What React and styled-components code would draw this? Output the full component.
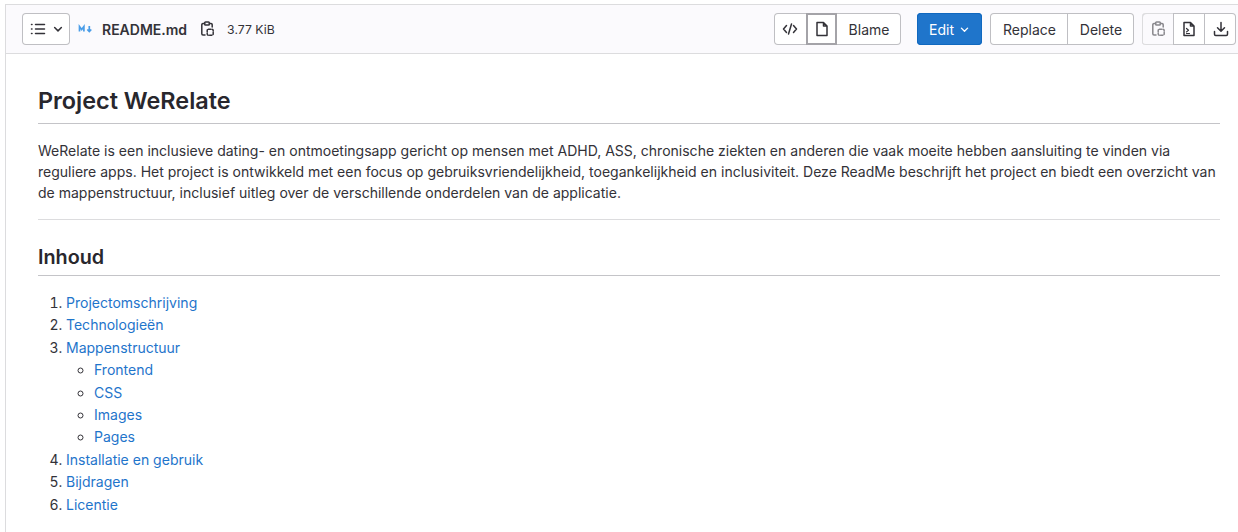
import React from "react";
import styled, { createGlobalStyle } from "styled-components";

const GlobalStyle = createGlobalStyle`
  html, body {
    margin: 0;
    padding: 0;
    background: #fff;
    overflow: hidden;
  }
  body {
    font-family: Inter, "Noto Sans", sans-serif;
    color: #333238;
  }
`;

const Page = styled.div`
  width: 1238px;
  height: 532px;
  padding: 4px 0 0 5px;
  box-sizing: border-box;
  overflow: hidden;
`;
const Card = styled.div`
  width: 1240px;
  height: 540px;
  box-sizing: border-box;
  border-top: 1px solid #dcdcde;
  border-left: 1px solid #dcdcde;
`;
const Header = styled.div`
  display: flex;
  align-items: center;
  height: 48px;
  box-sizing: content-box;
  padding-right: 9px;
  padding-left: 16px;
  background: #fbfafd;
  border-bottom: 1px solid #dcdcde;
`;
const FileInfo = styled.div`
  display: flex;
  align-items: center;
  flex: 1;
`;
const Group = styled.div`
  display: flex;
  height: 32px;
  margin-left: ${(p) => p.$gap || 0}px;
  background: #fff;
  border-radius: 4px;
  box-shadow: inset 0 0 0 1px #bfbfc3;
`;
const Button = styled.div`
  display: flex;
  align-items: center;
  justify-content: center;
  box-sizing: border-box;
  width: ${(p) => p.$w}px;
  height: 32px;
  padding-left: ${(p) => p.$nudge || 0}px;
  font-size: 14px;
  color: #333238;
  border-left: ${(p) => (p.$split ? "1px solid #bfbfc3" : "none")};
  box-shadow: ${(p) => (p.$active ? "inset 0 0 0 2px #a4a3a8" : "none")};
`;
const DisabledButton = styled(Button)`
  background: #fbfafd;
  border-radius: 4px 0 0 4px;
  box-shadow: inset 1px 1px 0 #dcdcde, inset 0 -1px 0 #dcdcde;
`;
const TocToggle = styled(Group)`
  width: 48px;
  align-items: center;
  justify-content: center;
  gap: 6px;
  padding-left: 1px;
  box-sizing: border-box;
`;
const MdIcon = styled.svg`
  width: 16px;
  height: 16px;
  margin-left: 8px;
  color: #4a9de8;
`;
const FileName = styled.span`
  margin-left: 8px;
  font-size: 14px;
  font-weight: 600;
  color: #333238;
`;
const CopyPath = styled.span`
  display: flex;
  margin-left: 12px;
`;
const FileSize = styled.span`
  margin-left: 12px;
  font-size: 12.25px;
  color: #333238;
`;
const EditButton = styled.div`
  display: flex;
  align-items: center;
  justify-content: center;
  gap: 5px;
  width: 65px;
  height: 32px;
  margin-left: 16px;
  border-radius: 4px;
  background: #1f75cb;
  box-shadow: inset 0 0 0 1px #1068bf;
  color: #fff;
  font-size: 14px;
`;
const Body = styled.div`
  padding: 32px 18px 0 32px;
  width: 1182px;
  font-size: 14.02px;
  line-height: 21px;
  color: #333238;
`;
const Heading = styled.h1`
  margin: ${(p) => (p.$sub ? "24px" : "0")} 0 16px;
  padding-bottom: ${(p) => (p.$sub ? "5px" : "7px")};
  font-size: ${(p) => (p.$sub ? "19.8px" : "23.4px")};
  line-height: ${(p) => (p.$sub ? "26px" : "30px")};
  font-weight: 600;
  color: #28272d;
  border-bottom: 1px solid #c4c4c8;
`;
const Paragraph = styled.p`
  margin: 0 0 16px;
`;
const Rule = styled.hr`
  margin: 0;
  border: 0;
  border-top: 1px solid #dcdcde;
`;
const OrderedList = styled.ol`
  margin: 0;
  padding-left: 28px;
`;
const SubList = styled.ul`
  margin: 0;
  padding-left: 28px;
  list-style: circle;
`;
const Item = styled.li`
  margin-top: 1.4px;
`;
const TocLink = styled.a`
  color: #1f75cb;
  text-decoration: none;
`;

const Icon = ({ children, color = "#333238", size = 16 }) => (
  <svg width={size} height={size} viewBox="0 0 16 16" fill="none" stroke={color} strokeWidth="1.5" strokeLinecap="round" strokeLinejoin="round">
    {children}
  </svg>
);

const ClipboardIcon = ({ color }) => (
  <Icon color={color}>
    <path d="M5.500 2.500H4a1.200 1.200 0 0 0-1.200 1.200v9.100A1.200 1.200 0 0 0 4 14h2" />
    <path d="M10.500 2.500H12a1.200 1.200 0 0 1 1.200 1.200v2.300" />
    <rect x="5.700" y="1" width="4.600" height="3" rx=".8" />
    <rect x="8.200" y="8.200" width="6" height="6" rx="1.200" strokeDasharray="2.200 1.400" />
  </Icon>
);

const items = ["Frontend", "CSS", "Images", "Pages"];

export default function App() {
  return (
    <Page>
      <GlobalStyle />
      <Card>
        <Header>
          <FileInfo>
            <TocToggle>
              <Icon>
                <path d="M5.500 3.500h9M5.500 8h9M5.500 12.500h9M1.500 3.500h.5M1.500 8h.5M1.500 12.500h.5" />
              </Icon>
              <Icon size={12}>
                <path d="M3.500 6l4.500 4.500L12.500 6" strokeWidth="2" />
              </Icon>
            </TocToggle>
            <MdIcon viewBox="0 0 16 16" fill="none" stroke="currentColor" strokeWidth="1.700">
              <path d="M1.500 10.500V5.500l2.200 3 2.200-3v5" />
              <path d="M11.300 5v5.500M9.300 8.500l2 2 2-2" />
            </MdIcon>
            <FileName>README.md</FileName>
            <CopyPath>
              <ClipboardIcon />
            </CopyPath>
            <FileSize>3.77 KiB</FileSize>
          </FileInfo>
          <Group>
            <Button $w={32}>
              <Icon>
                <path d="M4.500 4.500L1.500 8l3 3.500M11.500 4.500l3 3.500-3 3.500M9.500 3l-3 10" />
              </Icon>
            </Button>
            <Button $w={31} $active>
              <Icon>
                <path d="M3 1.500h6.500L13 5v9.500H3zM9.500 1.500V5H13" />
              </Icon>
            </Button>
            <Button $w={64}>Blame</Button>
          </Group>
          <EditButton>
            Edit
            <Icon color="#fff" size={11}>
              <path d="M3.500 6l4.500 4.500L12.500 6" strokeWidth="2" />
            </Icon>
          </EditButton>
          <Group $gap={8}>
            <Button $w={77} $nudge={2}>Replace</Button>
            <Button $w={67} $split>Delete</Button>
          </Group>
          <Group $gap={8}>
            <DisabledButton $w={31}>
              <ClipboardIcon color="#89888d" />
            </DisabledButton>
            <Button $w={31} $split>
              <Icon>
                <path d="M3 1.500h6.500L13 5v9.500H3zM9.500 1.500V5H13" />
                <path d="M5.500 7.500l2 1.700-2 1.700M5.500 12.500h3" strokeWidth="1.200" />
              </Icon>
            </Button>
            <Button $w={32} $split>
              <Icon>
                <path d="M8 1.500v8.500M4.500 6.800L8 10.300l3.500-3.500M1.500 10.500v2.800a1.200 1.200 0 0 0 1.200 1.200h10.600a1.200 1.200 0 0 0 1.200-1.200v-2.800" />
              </Icon>
            </Button>
          </Group>
        </Header>
        <Body>
          <Heading>Project WeRelate</Heading>
          <Paragraph>
            WeRelate is een inclusieve dating- en ontmoetingsapp gericht op mensen met ADHD, ASS, chronische ziekten en anderen die vaak moeite hebben aansluiting te vinden via reguliere apps. Het project is ontwikkeld met een focus op gebruiksvriendelijkheid, toegankelijkheid en inclusiviteit. Deze ReadMe beschrijft het project en biedt een overzicht van de mappenstructuur, inclusief uitleg over de verschillende onderdelen van de applicatie.
          </Paragraph>
          <Rule />
          <Heading as="h2" $sub>Inhoud</Heading>
          <OrderedList>
            <Item><TocLink href="#">Projectomschrijving</TocLink></Item>
            <Item><TocLink href="#">Technologieën</TocLink></Item>
            <Item>
              <TocLink href="#">Mappenstructuur</TocLink>
              <SubList>
                {items.map((name) => (
                  <Item key={name}><TocLink href="#">{name}</TocLink></Item>
                ))}
              </SubList>
            </Item>
            <Item><TocLink href="#">Installatie en gebruik</TocLink></Item>
            <Item><TocLink href="#">Bijdragen</TocLink></Item>
            <Item><TocLink href="#">Licentie</TocLink></Item>
          </OrderedList>
        </Body>
      </Card>
    </Page>
  );
}
